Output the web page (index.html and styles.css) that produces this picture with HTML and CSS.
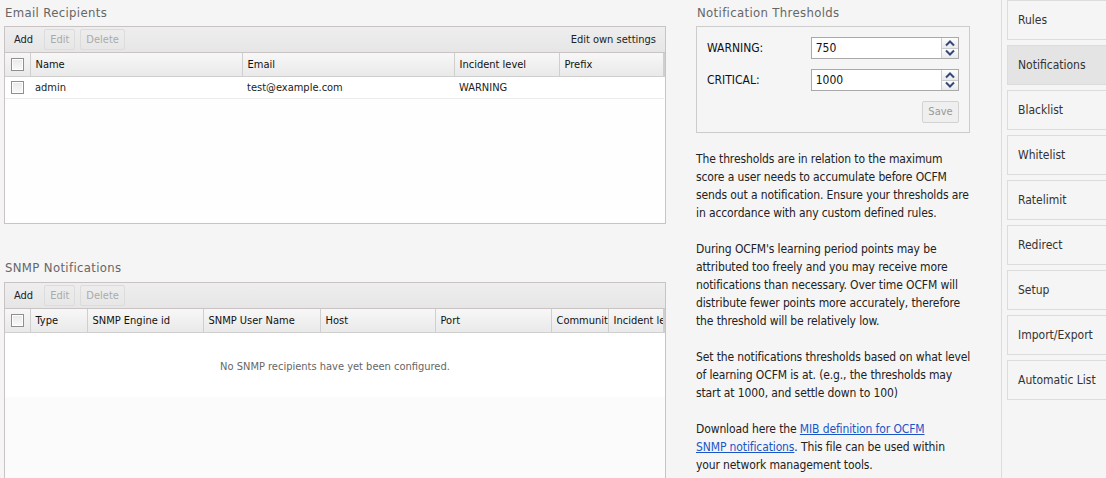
FILE: index.html
```html
<!DOCTYPE html>
<html>
<head>
<meta charset="utf-8">
<link rel="stylesheet" href="styles.css">
</head>
<body>
<div class="page">
  <div class="main">
    <h2 class="title">Email Recipients</h2>
    <div class="grid email-grid">
      <div class="toolbar">
        <span class="tbtn">Add</span>
        <span class="tbtn disabled">Edit</span>
        <span class="tbtn disabled">Delete</span>
        <span class="spacer"></span>
        <span class="tbtn">Edit own settings</span>
      </div>
      <table class="gtable">
        <colgroup><col class="c-chk"><col style="width:212px"><col style="width:212px"><col style="width:105px"><col></colgroup>
        <thead>
          <tr><th><span class="cb"></span></th><th>Name</th><th>Email</th><th>Incident level</th><th>Prefix</th></tr>
        </thead>
        <tbody>
          <tr><td><span class="cb"></span></td><td>admin</td><td>test@example.com</td><td>WARNING</td><td></td></tr>
        </tbody>
      </table>
    </div>

    <h2 class="title snmp-title">SNMP Notifications</h2>
    <div class="grid snmp-grid">
      <div class="toolbar">
        <span class="tbtn">Add</span>
        <span class="tbtn disabled">Edit</span>
        <span class="tbtn disabled">Delete</span>
      </div>
      <table class="gtable">
        <colgroup><col class="c-chk"><col style="width:57px"><col style="width:116px"><col style="width:117px"><col style="width:115px"><col style="width:116px"><col style="width:57px"><col></colgroup>
        <thead>
          <tr><th><span class="cb"></span></th><th>Type</th><th>SNMP Engine id</th><th>SNMP User Name</th><th>Host</th><th>Port</th><th>Community</th><th>Incident level</th></tr>
        </thead>
      </table>
      <div class="empty">No SNMP recipients have yet been configured.</div>
    </div>
  </div>

  <div class="side">
    <h2 class="title">Notification Thresholds</h2>
    <div class="thbox">
      <div class="frow">
        <label class="flabel">WARNING:</label>
        <div class="spin"><span class="sval">750</span><span class="sbtns">
          <span class="sb"><svg width="12" height="8" viewBox="0 0 12 8"><path d="M2 6.5 L6 2.5 L10 6.5" fill="none" stroke="#34497a" stroke-width="2"/></svg></span>
          <span class="sb"><svg width="12" height="8" viewBox="0 0 12 8"><path d="M2 1.5 L6 5.5 L10 1.5" fill="none" stroke="#34497a" stroke-width="2"/></svg></span>
        </span></div>
      </div>
      <div class="frow">
        <label class="flabel">CRITICAL:</label>
        <div class="spin"><span class="sval">1000</span><span class="sbtns">
          <span class="sb"><svg width="12" height="8" viewBox="0 0 12 8"><path d="M2 6.5 L6 2.5 L10 6.5" fill="none" stroke="#34497a" stroke-width="2"/></svg></span>
          <span class="sb"><svg width="12" height="8" viewBox="0 0 12 8"><path d="M2 1.5 L6 5.5 L10 1.5" fill="none" stroke="#34497a" stroke-width="2"/></svg></span>
        </span></div>
      </div>
      <div class="saverow"><span class="savebtn">Save</span></div>
    </div>
    <div class="help">
      <p>The thresholds are in relation to the maximum score a user needs to accumulate before OCFM sends out a notification. Ensure your thresholds are in accordance with any custom defined rules.</p>
      <p>During OCFM's learning period points may be attributed too freely and you may receive more notifications than necessary. Over time OCFM will distribute fewer points more accurately, therefore the threshold will be relatively low.</p>
      <p>Set the notifications thresholds based on what level of learning OCFM is at. (e.g., the thresholds may start at 1000, and settle down to 100)</p>
      <p>Download here the <a href="#">MIB definition for OCFM<br>SNMP notifications</a>. This file can be used within <span class="nw">your network</span> management tools.</p>
    </div>
  </div>

  <nav class="nav">
    <div class="nitem">Rules</div>
    <div class="nitem active">Notifications</div>
    <div class="nitem">Blacklist</div>
    <div class="nitem">Whitelist</div>
    <div class="nitem">Ratelimit</div>
    <div class="nitem">Redirect</div>
    <div class="nitem">Setup</div>
    <div class="nitem">Import/Export</div>
    <div class="nitem">Automatic List</div>
  </nav>
</div>
</body>
</html>
```
FILE: styles.css
```css
* { box-sizing: border-box; }
html, body { margin: 0; padding: 0; }
body {
  background: #f5f5f5;
  font-family: "DejaVu Sans Condensed", "DejaVu Sans", sans-serif;
  font-size: 11px;
  color: #222;
  width: 1106px;
  height: 478px;
  overflow: hidden;
}
.page {
  display: flex;
  align-items: flex-start;
  height: 478px;
}
.main {
  width: 666px;
  padding-left: 4px;
  flex: none;
}
.title {
  margin: 0;
  padding-top: 5px;
  height: 26px;
  font-size: 13px;
  line-height: 16px;
  font-weight: normal;
  letter-spacing: 0.35px;
  color: #666;
  padding-left: 1px;
}
.snmp-title { margin-top: 32px; height: 26px; padding-top: 4px; }
.grid {
  border: 1px solid #c9c3c3;
  background: #fff;
  width: 662px;
}
.email-grid { height: 198px; background: #fefefe; }
.snmp-grid { height: 200px; background: #fbfbfb; }
.toolbar {
  display: flex;
  align-items: center;
  height: 26px;
  padding: 0 3px;
  background: linear-gradient(#eeeeee, #e6e6e6);
  border-bottom: 1px solid #c9c3c3;
  gap: 5px;
}
.spacer { flex: 1; }
.tbtn {
  padding: 3px 5px;
  border: 1px solid transparent;
  border-radius: 2px;
  color: #222;
}
.tbtn.disabled {
  color: #aaa;
  border-color: #dcdcdc;
}
.gtable {
  width: 100%;
  border-collapse: collapse;
  table-layout: fixed;
}
.c-chk { width: 25px; }
.gtable th {
  height: 23px;
  text-align: left;
  font-weight: normal;
  padding: 0 5px;
  background: linear-gradient(#f7f7f7, #e9e9e9);
  border-right: 1px solid #cfcfcf;
  border-bottom: 1px solid #cfcfcf;
  white-space: nowrap;
  overflow: hidden;
  color: #111;
}
.gtable th:last-child { border-right: 2px solid #cfcfcf; }
.gtable td {
  height: 22px;
  padding: 0 5px;
  background: #fff;
  border-bottom: 1px solid #ececec;
  white-space: nowrap;
}
.gtable th:first-child, .gtable td:first-child { padding: 0 0 0 6px; }
.cb {
  display: inline-block;
  width: 13px;
  height: 13px;
  border: 1px solid #8f8f8f;
  background: linear-gradient(#e8e8e8, #fafafa);
  vertical-align: middle;
  box-shadow: inset 0 0 0 1px #fff;
}
.empty {
  background: #fff;
  height: 64px;
  text-align: center;
  color: #666;
  padding-top: 27px;
}
.side {
  width: 280px;
  margin-left: 30px;
  flex: none;
}
.thbox {
  width: 274px;
  height: 107px;
  border: 1px solid #cccccc;
  padding: 10px 10px 0 10px;
}
.frow {
  display: flex;
  align-items: center;
  height: 22px;
  margin-bottom: 10px;
}
.flabel { width: 105px; color: #111; font-size: 12px; }
.spin {
  display: flex;
  width: 150px;
  height: 22px;
  border: 1px solid #a9a9a9;
  background: #fff;
}
.sval { flex: 1; padding: 3px 4px; font-size: 12px; color: #111; }
.sbtns {
  width: 17px;
  display: flex;
  flex-direction: column;
  border-left: 1px solid #ccc;
}
.sb {
  flex: 1;
  display: flex;
  align-items: center;
  justify-content: center;
  background: linear-gradient(#fdfdfd, #eaeaea);
}
.sb:first-child { border-bottom: 1px solid #ccc; }
.saverow { display: flex; justify-content: flex-end; }
.savebtn {
  display: inline-block;
  width: 37px;
  height: 22px;
  line-height: 20px;
  text-align: center;
  border: 1px solid #d2d2d2;
  border-radius: 2px;
  color: #999;
  background: #efefef;
  font-size: 11px;
}
.help {
  width: 276px;
  margin-top: 17px;
  font-size: 12px;
  line-height: 18px;
  letter-spacing: -0.12px;
  color: #222;
}
.help p { margin: 0 0 18px 0; }
.help a { color: #1a55c8; text-decoration: underline; }
.nw { white-space: nowrap; }
.nav {
  margin-left: 25px;
  border-left: 1px solid #dcdcdc;
  height: 478px;
  padding-left: 5px;
  flex: 1;
}
.nitem {
  height: 40px;
  margin-bottom: 5px;
  border: 1px solid #dcdcdc;
  border-right: none;
  padding-left: 10px;
  line-height: 38px;
  font-size: 12px;
  color: #333;
}
.nitem.active { background: #e4e4e4; }
```
